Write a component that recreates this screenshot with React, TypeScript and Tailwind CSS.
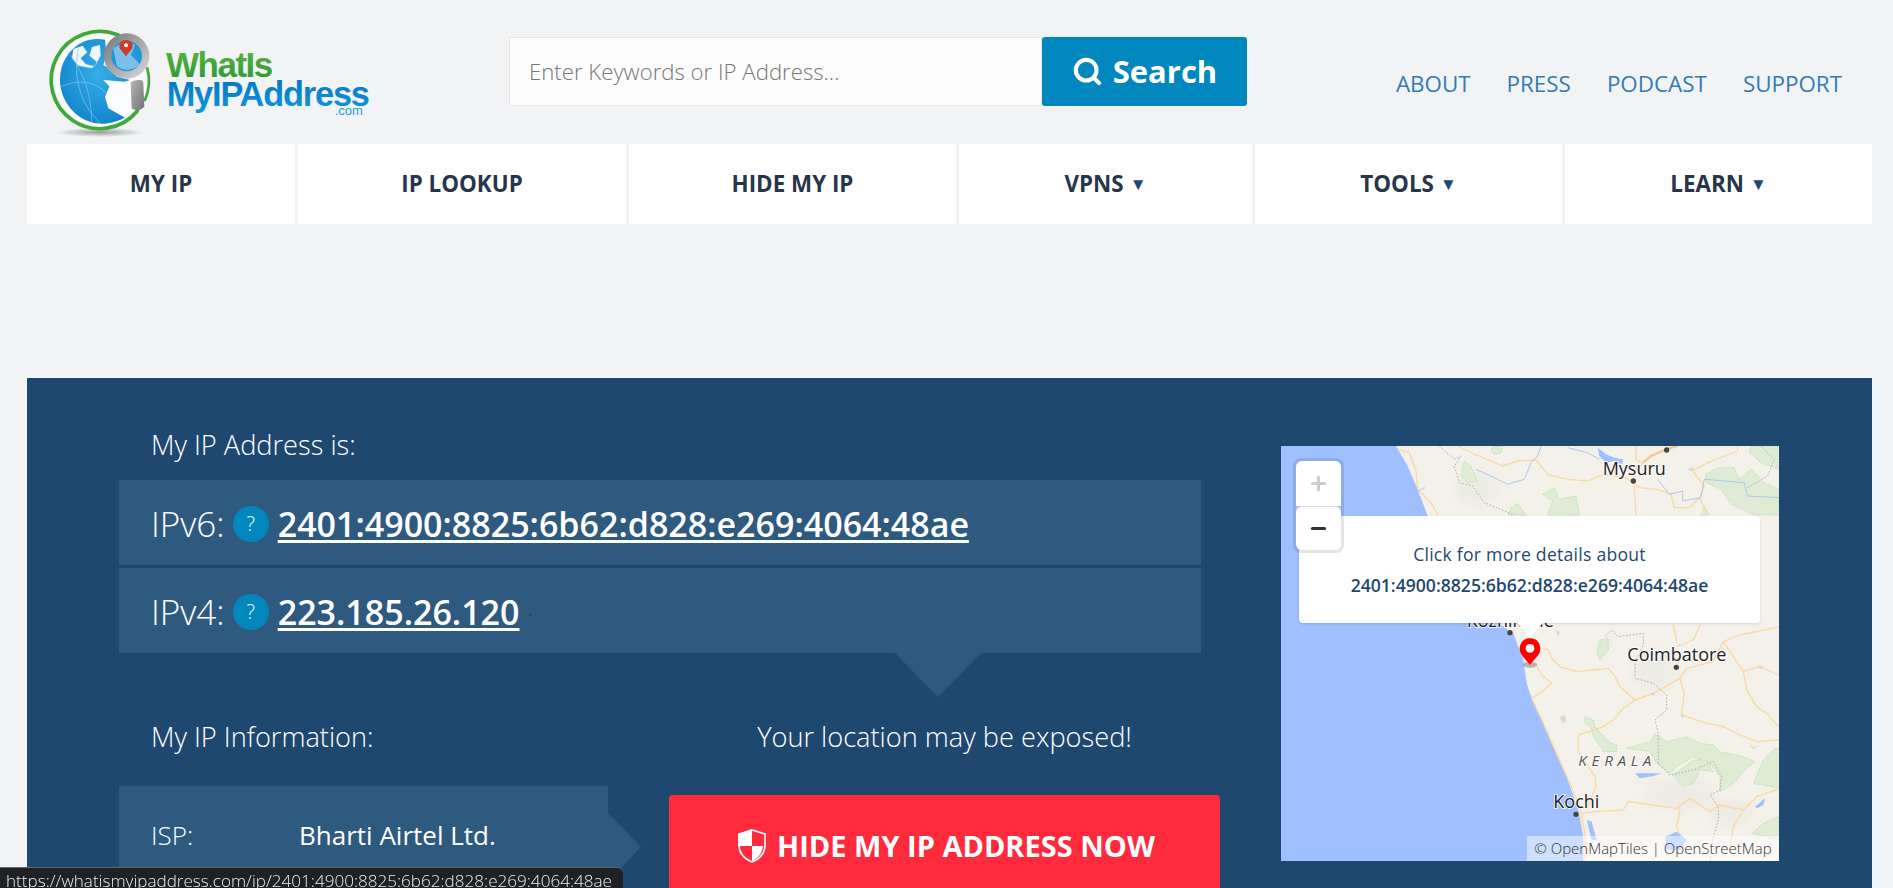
import { Minus, Plus, Search } from 'lucide-react';

const navItems = [
  { label: 'MY IP', width: 'w-[268px]', caret: false },
  { label: 'IP LOOKUP', width: 'w-[328px]', caret: false },
  { label: 'HIDE MY IP', width: 'w-[327px]', caret: false },
  { label: 'VPNS', width: 'w-[293px]', caret: true },
  { label: 'TOOLS', width: 'w-[307px]', caret: true },
  { label: 'LEARN', width: 'w-[307px]', caret: true },
];

const topLinks = ['ABOUT', 'PRESS', 'PODCAST', 'SUPPORT'];

const ADDRESS = '2401:4900:8825:6b62:d828:e269:4064:48ae';

function Logo() {
  return (
    <svg viewBox="0 0 1020 372" className="w-[340px] h-[124px] shrink-0">
      <defs>
        <linearGradient id="greenText" x1="0" y1="0" x2="0" y2="1">
          <stop offset="0" stopColor="#62b63e" />
          <stop offset="1" stopColor="#27973a" />
        </linearGradient>
        <linearGradient id="blueText" x1="0" y1="0" x2="0" y2="1">
          <stop offset="0" stopColor="#0576bf" />
          <stop offset="1" stopColor="#1096dc" />
        </linearGradient>
        <linearGradient id="lens" x1="0" y1="0" x2="1" y2="1">
          <stop offset="0" stopColor="#757575" />
          <stop offset="1" stopColor="#dcdcdc" />
        </linearGradient>
        <linearGradient id="handle" x1="0" y1="0" x2="1" y2="1">
          <stop offset="0" stopColor="#b4b4b4" />
          <stop offset="1" stopColor="#747474" />
        </linearGradient>
        <radialGradient id="sea" cx="0.55" cy="0.4" r="0.75">
          <stop offset="0" stopColor="#35aeea" />
          <stop offset="1" stopColor="#0b7dc6" />
        </radialGradient>
        <radialGradient id="ground">
          <stop offset="0" stopColor="#808080" stopOpacity="0.75" />
          <stop offset="1" stopColor="#808080" stopOpacity="0" />
        </radialGradient>
      </defs>
      <g transform="translate(30 15)">
        <ellipse cx="150" cy="322" rx="135" ry="14" fill="url(#ground)" />
        <circle cx="152" cy="165" r="138" fill="#f8fafb" />
        <path d="M205 30 A146 146 0 1 0 262 258" fill="none" stroke="#3fa838" strokeWidth="11" strokeLinecap="round" />
        <path d="M292 130 A146 146 0 0 1 285 225" fill="none" stroke="#3fa838" strokeWidth="8" strokeLinecap="round" />
        <path d="M30 165 C30 115 55 72 100 50 C120 42 140 40 165 44 L170 90 L160 120 L185 135 L200 155 L240 165 L178 185 L165 215 L175 250 L225 278 C190 295 160 299 140 295 C80 287 30 230 30 165 Z" fill="url(#sea)" />
        <path d="M70 72 L98 62 L112 82 L92 100 L108 118 L134 124 L140 110 L118 92 L126 66 L150 60 L152 92 L138 118 L125 130 L85 122 L66 100 Z" fill="#eef7fc" />
        <path d="M160 165 L240 172 L245 215 L225 268 L212 270 L178 248 L168 215 L182 188 Z" fill="#fbfcfd" />
        <path d="M60 90 C100 140 125 210 125 290 M34 185 C90 160 135 170 170 205 M85 70 C70 150 85 230 150 294" stroke="#86c9ef" strokeWidth="2" fill="none" />
        <circle cx="230" cy="93" r="68" fill="url(#lens)" />
        <circle cx="230" cy="93" r="46" fill="#1f97da" />
        <path d="M190 70 C208 55 235 50 255 60 L243 90 L270 118 C250 140 215 138 200 122 Z" fill="#e8f4fb" opacity="0.45" />
        <path d="M228 45 C214 45 208 55 208 63 C208 75 222 82 228 95 C234 82 248 75 248 63 C248 55 242 45 228 45 Z" fill="#d13a2a" />
        <circle cx="228" cy="61" r="6" fill="#ffffff" />
        <path d="M242 172 C252 166 265 164 274 166 C279 168 280 172 280 176 L283 245 C270 258 255 258 245 250 Z" fill="url(#handle)" />
      </g>
      <text x="378" y="170" fontFamily="Liberation Sans, sans-serif" fontWeight="700" fontSize="105" letterSpacing="-4.5" fill="url(#greenText)">WhatIs</text>
      <text x="380" y="258" fontFamily="Liberation Sans, sans-serif" fontWeight="700" fontSize="103" letterSpacing="-3.5" fill="url(#blueText)">MyIPAddress</text>
      <text x="884" y="285" fontFamily="Liberation Sans, sans-serif" fontSize="39" fill="#1a9ee0">.com</text>
    </svg>
  );
}

function Shield() {
  return (
    <svg viewBox="0 0 28 34" className="w-[28px] h-[34px] shrink-0">
      <path d="M14 1 L27 5 V16 C27 25 21 30 14 33 C7 30 1 25 1 16 V5 Z" fill="none" stroke="#ffffff" strokeWidth="1.6" />
      <path d="M14 0 V17 H0 V5 Z" fill="#ffffff" />
      <path d="M14 17 H25 C24 25 20 29 14 32 Z" fill="#ffffff" />
    </svg>
  );
}

// map paths, north part (origin at the map's top left, 3 units per pixel)
const northGreens = [
  'M550 45 L570 60 L590 105 L560 110 L540 90 L545 65 Z',
  'M635 0 L665 0 L660 20 L640 25 L630 15 Z',
  'M785 145 L820 125 L835 160 L885 150 L895 207 L800 207 L815 165 Z',
  'M690 185 L710 172 L735 207 L680 207 Z',
  'M1275 85 L1310 65 L1360 65 L1375 100 L1410 70 L1450 110 L1494 130 L1494 207 L1420 207 L1350 175 L1320 130 L1275 110 Z',
  'M1410 0 L1490 0 L1490 70 L1440 50 L1405 20 Z',
  'M1260 207 L1270 180 L1285 207 Z',
];

const northRoads = [
  'M350 10 L385 20 L405 75 L410 130 L450 170 L470 207',
  'M530 0 L560 15 L640 50 L665 60 L710 45 L765 42 L800 85 L860 100 L920 105 L970 85 L1030 95 L1050 105',
  'M1065 0 L1065 40 L1085 55',
  'M1050 105 L1075 125 L1130 130 L1170 145 L1180 185 L1225 185 L1255 155 L1270 120 L1235 75 L1280 50 L1370 15 L1370 0',
  'M1060 120 L1065 207',
  'M1255 155 L1280 205',
  'M1085 55 L1050 85',
];

// map paths, south part
const southGreens = [
  'M315 290 L340 300 L345 320 L385 365 L410 375 L410 395 L370 395 L360 375 L340 350 L335 325 L315 310 Z',
  'M440 385 L510 365 L525 340 L560 365 L620 350 L660 370 L700 375 L720 395 L790 410 L825 425 L795 450 L760 490 L720 515 L720 470 L690 430 L640 410 L590 440 L570 460 L530 430 L510 395 Z',
  'M580 465 L640 420 L680 420 L700 455 L660 450 L640 490 L610 500 Z',
  'M820 490 L850 420 L885 385 L900 385 L900 505 Z',
  'M360 60 L385 55 L385 90 L360 120 L350 100 Z',
  'M815 640 L850 610 L895 590 L900 660 L860 650 Z',
];

const southRoads = [
  'M185 85 L205 90 L215 115 L240 140 L290 155 L340 150 L385 145 L405 170 L420 200 L465 240 L520 220 L600 175 L620 145 L700 125 L730 65 L780 45 L900 20',
  'M730 65 L790 155 L840 140 L895 165',
  'M790 155 L800 210 L830 260 L860 280 L895 320',
  'M600 175 L612 220 L605 285 L680 310 L730 320 L780 345 L830 365 L895 360',
  'M465 240 L430 265 L400 300 L370 320 L295 345 L295 395 L345 470 L348 500 L320 570',
  'M170 140 L185 165 L215 190 L185 215 L155 235',
  'M155 235 L190 310 L225 390 L265 480 L300 560 L315 640 L315 723',
  'M300 580 L345 575 L430 570 L445 545 L520 555 L590 565 L630 535 L690 575 L720 555 L790 570 L830 530 L900 505',
  'M590 565 L600 570 L590 620 L610 680',
  'M790 570 L760 620 L750 680',
  'M580 15 L590 65',
  'M660 15 L640 60 L590 80',
  'M810 375 L820 385 L830 378',
];

function MapDrawing() {
  const label = 'Open Sans, sans-serif';
  return (
    <svg viewBox="33 48 1494 1245" className="w-[498px] h-[415px] block">
      <defs>
        <filter id="soft">
          <feGaussianBlur stdDeviation="18" />
        </filter>
      </defs>
      <rect x="33" y="48" width="1494" height="1245" fill="#9fbfff" />
      <path d="M378 48 L413 108 L443 178 L473 258 L560 480 L700 590 L730 610 L760 690 L770 760 L785 805 L820 880 L855 960 L890 1040 L925 1140 L940 1220 L940 1293 L1527 1293 L1527 48 Z" fill="#f4f1ea" />
      <g filter="url(#soft)" fill="#ecebe4">
        <ellipse cx="1150" cy="720" rx="70" ry="60" />
        <ellipse cx="1230" cy="1090" rx="110" ry="50" />
        <ellipse cx="620" cy="180" rx="70" ry="50" />
        <ellipse cx="1380" cy="1150" rx="70" ry="40" />
      </g>
      <g transform="translate(33 48)">
        {northGreens.map(d => (
          <path key={d} d={d} fill="#e0ebd5" stroke="#a6e2a0" strokeWidth="2.5" strokeDasharray="5 4" />
        ))}
        {northRoads.map(d => (
          <path key={d} d={d} fill="none" stroke="#fad9a1" strokeWidth="4" strokeLinejoin="round" />
        ))}
        <path d="M1085 50 L1110 30 L1155 10 L1190 0" fill="none" stroke="#f8c888" strokeWidth="7" />
        <path d="M475 0 L520 40 L540 30 L520 60 L535 110 L575 120 L610 170 L700 207 M1400 125 L1460 90 L1480 40 L1440 0" fill="none" stroke="#b3b0ad" strokeWidth="3" strokeDasharray="5 5" />
        <path d="M585 70 L640 95 L680 115 L730 100 L750 50 L770 30 L780 0 M860 5 L920 20 L955 40 M1130 100 L1165 145 L1205 135 L1205 165 L1260 155 L1270 100 L1390 110 L1400 150 L1494 155 M410 135 L432 125" fill="none" stroke="#a9c9ee" strokeWidth="3" />
        <path d="M950 5 L975 25 L1000 35 L1025 40 L1025 55 L1000 45 L975 50 L955 30 Z" fill="#9fbfff" />
        <path d="M1220 70 L1235 62 L1240 72 L1225 75 Z" fill="#d8d8d8" />
      </g>
      <g transform="translate(630 570)">
        {southGreens.map(d => (
          <path key={d} d={d} fill="#e0ebd5" stroke="#a6e2a0" strokeWidth="2.5" strokeDasharray="5 4" />
        ))}
        {southRoads.map(d => (
          <path key={d} d={d} fill="none" stroke="#fad9a1" strokeWidth="4" strokeLinejoin="round" />
        ))}
        <path d="M375 50 L395 30 L415 50 L490 40 L490 75 L465 130 L465 175 L520 190 L560 225 L560 270 L525 300 L535 340 L535 430 L570 465 L640 450 L700 425 L725 470 L720 510 L690 525 L715 560 L715 600 L700 650 L690 723" fill="none" stroke="#b3b0ad" strokeWidth="3" strokeDasharray="5 5" />
        <path d="M465 460 L545 460 L520 468 L480 475 Z M825 560 L855 535 L850 555 L830 565 Z M320 600 L335 605 L350 660 L335 660 Z M555 650 L590 635 L620 660 L600 690 L560 690 Z" fill="#9fbfff" />
        <path d="M240 290 L255 285 L258 305 L245 310 Z M600 285 L612 282 L610 298 Z M225 30 L240 35 L235 48 Z M835 135 L850 140 L840 148 Z M510 220 L530 215 L520 228 Z" fill="#d8d8d8" />
      </g>
      <g fontFamily={label} fill="#222222" stroke="#ffffff" strokeWidth="6" paintOrder="stroke" strokeOpacity="0.8">
        <text x="998" y="135" fontSize="54">Mysuru</text>
        <text x="1072" y="693" fontSize="54">Coimbatore</text>
        <text x="850" y="1134" fontSize="54">Kochi</text>
        <text x="590" y="590" fontSize="54">Kozhikode</text>
        <text x="925" y="1008" fontSize="46" fontStyle="italic" letterSpacing="14" fill="#555555">KERALA</text>
      </g>
      <g fill="#444444">
        <circle cx="1090" cy="153" r="8" />
        <circle cx="1190" cy="60" r="8" />
        <circle cx="1219" cy="712" r="8" />
        <circle cx="918" cy="1153" r="8" />
        <circle cx="720" cy="608" r="8" />
      </g>
      <ellipse cx="780" cy="704" rx="22" ry="9" fill="#777777" opacity="0.5" />
      <path d="M780 625 C755 625 749 645 749 658 C749 675 770 690 780 705 C790 690 811 675 811 658 C811 645 805 625 780 625 Z" fill="#ff0000" />
      <circle cx="780" cy="655" r="13" fill="#ffffff" />
    </svg>
  );
}

function MapCard() {
  return (
    <div className="relative w-[498px] h-[415px] overflow-hidden shrink-0">
      <MapDrawing />
      <div className="absolute left-[18px] top-[70px] w-[461px] h-[107px] bg-white rounded-[4px] shadow-sm flex flex-col items-center justify-center gap-[8px] text-[#1f4870] text-[17.6px] leading-[23px]">
        <div className="tracking-[0.25px]">Click for more details about</div>
        <div className="font-semibold">{ADDRESS}</div>
        <div className="absolute top-full left-[218px] w-0 h-0 border-x-[13px] border-x-transparent border-t-[14px] border-t-white" />
      </div>
      <div className="absolute left-[12px] top-[12px] w-[51px] h-[95px] border-[3px] border-black/10 rounded-[8px] bg-clip-padding">
        <div className="h-[45px] bg-white rounded-t-[6px] flex items-center justify-center text-[#cccccc]">
          <Plus size={21} strokeWidth={3.5} />
        </div>
        <div className="h-[44px] bg-white rounded-[6px] border-t border-[#dddddd] flex items-center justify-center text-[#333333]">
          <Minus size={21} strokeWidth={3.5} />
        </div>
      </div>
      <div className="absolute right-0 bottom-0 h-[25px] w-[252px] bg-white/50 flex items-center justify-center text-[15px] font-light text-[#333333] whitespace-nowrap">
        © OpenMapTiles | OpenStreetMap
      </div>
    </div>
  );
}

function IpRow({ label, value, dot }: { label: string; value: string; dot?: boolean }) {
  return (
    <div className="h-[85px] w-[1082px] bg-[#2e5a80] flex items-center pl-[32px] pt-[3px] text-white">
      <span className="font-light text-[35px]">{label}</span>
      <span className="ml-[8px] w-[36px] h-[36px] rounded-full bg-[#0087bd] flex items-center justify-center text-[20px] font-light">?</span>
      <a className="ml-[9px] font-semibold text-[34px] underline underline-offset-[3px] decoration-[3px]">{value}</a>
      {dot && <span className="ml-[9px] mt-[6px] w-[2px] h-[2px] bg-[#1a3fa8]" />}
    </div>
  );
}

export default function App() {
  return (
    <div className="relative h-screen overflow-hidden bg-[#f2f3f5] font-['Open_Sans',sans-serif]">
      {/* Header */}
      <header className="flex h-[144px] pl-[40px] pr-[51px]">
        <div className="pt-[20px]">
          <Logo />
        </div>
        <div className="ml-[129px] mt-[37px] flex h-[69px]">
          <div className="w-[533px] bg-[#fcfcfc] border border-[#e6e7e9] flex items-center pl-[19px] text-[22.2px] font-light text-[#777777]">
            Enter Keywords or IP Address...
          </div>
          <button className="w-[205px] bg-[#0087bd] rounded-[3px] flex items-center justify-center gap-[10px] text-white text-[31px] font-bold">
            <Search size={31} strokeWidth={3.2} />
            Search
          </button>
        </div>
        <div className="ml-auto mt-[68px] flex gap-[36px] h-[32px] items-center text-[22.4px] text-[#337ab7]">
          {topLinks.map(link => (
            <a key={link}>{link}</a>
          ))}
        </div>
      </header>

      {/* Main nav */}
      <nav className="flex gap-[3px] ml-[27px] h-[80px]">
        {navItems.map(item => (
          <a key={item.label} className={`${item.width} bg-white flex items-center justify-center gap-[6px] text-[22.4px] font-bold text-[#27354a]`}>
            {item.label}
            {item.caret && <span className="text-[17px] text-[#1f4870]">▼</span>}
          </a>
        ))}
      </nav>

      {/* IP panel */}
      <main className="mt-[154px] ml-[27px] mr-[21px] h-[520px] bg-[#1f4870] flex text-white">
        <div className="ml-[92px] w-[1101px] shrink-0">
          <h2 className="pt-[50px] h-[102px] pl-[32px] text-[27.2px] font-light leading-[34px]">My IP Address is:</h2>
          <div className="flex flex-col gap-[3px]">
            <IpRow label="IPv6:" value={ADDRESS} />
            <IpRow label="IPv4:" value="223.185.26.120" dot />
          </div>
          <div className="ml-[776px] w-[86px] h-[44px] bg-[#2e5a80] [clip-path:polygon(0_0,100%_0,50%_100%)]" />
          <div className="flex">
            <div className="w-[550px] shrink-0">
              <h2 className="mt-[23px] h-[34px] pl-[32px] text-[27.2px] font-light leading-[34px]">My IP Information:</h2>
              <div className="mt-[32px] w-[522px] h-[122px] bg-[#2e5a80] pl-[32px] pt-[32px] flex text-[26px] leading-[34px] [clip-path:polygon(0_0,489px_0,489px_27px,522px_61px,489px_95px,489px_100%,0_100%)]">
                <span className="w-[148px] font-light">ISP:</span>
                <span>Bharti Airtel Ltd.</span>
              </div>
            </div>
            <div className="w-[551px] shrink-0">
              <div className="mt-[23px] h-[34px] text-center text-[27.2px] font-light leading-[34px]">Your location may be exposed!</div>
              <button className="mt-[41px] w-[551px] h-[113px] pb-[12px] pl-[4px] bg-[#ff2a3c] rounded-[4px] flex items-center justify-center gap-[11px] text-[29px] font-bold">
                <Shield />
                HIDE MY IP ADDRESS NOW
              </button>
            </div>
          </div>
        </div>
        <div className="ml-[61px] mt-[68px]">
          <MapCard />
        </div>
      </main>

      {/* Link preview in the browser's status bar */}
      <div className="fixed left-0 bottom-0 w-[623px] h-[21px] bg-[#202124] border-t border-[#d0d0d0]/40 rounded-tr-[6px] overflow-hidden pl-[6px] pt-[1px] text-[#e8eaed] text-[17.1px] font-light leading-[24px] whitespace-nowrap">
        https://whatismyipaddress.com/ip/{ADDRESS}
      </div>
    </div>
  );
}
